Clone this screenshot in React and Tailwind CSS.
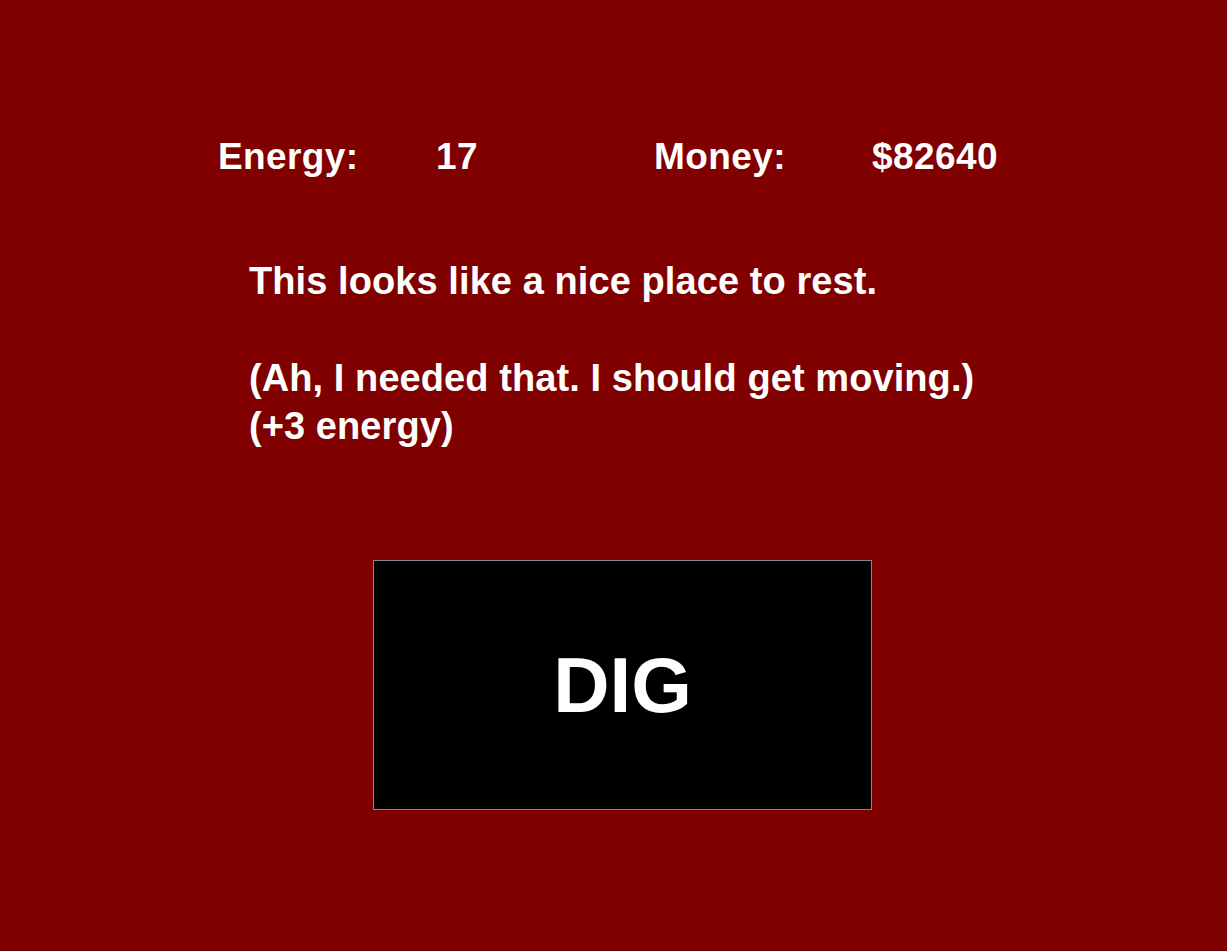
import React from 'react';

function Stat({ label, value }) {
  return (
    <>
      <div className="w-[218px]">{label}</div>
      <div className="w-[218px]">{value}</div>
    </>
  );
}

export default function App() {
  return (
    <div className="w-full h-[951px] bg-[#800000] text-white font-bold overflow-hidden font-['Liberation_Sans',Arial,sans-serif]">
      {/* stats */}
      <div className="flex pt-[136px] pl-[218px] text-[37px] leading-[42px] tracking-[0.4px]">
        <Stat label="Energy:" value="17" />
        <Stat label="Money:" value="$82640" />
      </div>

      {/* message */}
      <div className="mt-[79px] pl-[249px] text-[38px] leading-[48px] tracking-[0.08px]">
        <div>This looks like a nice place to rest.</div>
        <div className="h-[49px]" />
        <div>(Ah, I needed that. I should get moving.)</div>
        <div>(+3 energy)</div>
      </div>

      {/* dig button */}
      <button className="mt-[110px] ml-[373px] w-[499px] h-[250px] bg-black border border-[#7f8b99] flex items-center justify-center text-[78px] leading-none text-white">
        DIG
      </button>
    </div>
  );
}
